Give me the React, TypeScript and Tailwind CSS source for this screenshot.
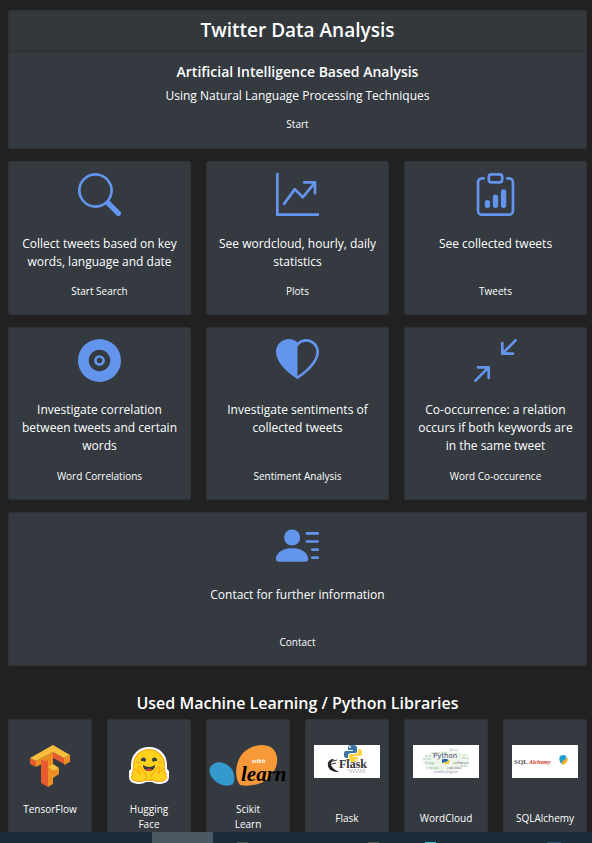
import type { ReactNode } from "react";
import {
  BsSearch,
  BsGraphUpArrow,
  BsClipboardData,
  BsVinylFill,
  BsHeartHalf,
  BsArrowsAngleContract,
  BsPersonLinesFill,
} from "react-icons/bs";

type Feature = { icon: ReactNode; text: string; action: string };

const searchFeatures: Feature[] = [
  { icon: <BsSearch size={43} />, text: "Collect tweets based on key words, language and date", action: "Start Search" },
  { icon: <BsGraphUpArrow size={43} />, text: "See wordcloud, hourly, daily statistics", action: "Plots" },
  { icon: <BsClipboardData size={43} />, text: "See collected tweets", action: "Tweets" },
];

const analysisFeatures: Feature[] = [
  { icon: <BsVinylFill size={43} />, text: "Investigate correlation between tweets and certain words", action: "Word Correlations" },
  { icon: <BsHeartHalf size={43} />, text: "Investigate sentiments of collected tweets", action: "Sentiment Analysis" },
  { icon: <BsArrowsAngleContract size={43} />, text: "Co-occurrence: a relation occurs if both keywords are in the same tweet", action: "Word Co-occurence" },
];

function ActionLink({ children }: { children: ReactNode }) {
  return (
    <a href="#" className="text-[10px] leading-4">
      {children}
    </a>
  );
}

function FeatureCard({ feature }: { feature: Feature }) {
  return (
    <article className="flex flex-col items-center rounded-xs border border-[#2e3338] bg-[#343a40] px-2 pt-[11px] pb-[15px]">
      <div className="text-[#6495ed]">{feature.icon}</div>
      <p className="mt-[19px] mb-2 text-[12px] leading-[18px]">{feature.text}</p>
      <div className="mt-auto flex">
        <ActionLink>{feature.action}</ActionLink>
      </div>
    </article>
  );
}

function TensorFlowLogo() {
  return (
    <svg viewBox="0 0 41 42" className="h-[42px] w-[41px]" aria-hidden="true">
      <path d="M0 13l6 3v6l-6-3z" fill="#e55b2d" />
      <path d="M6 16 23 7v6L6 22z" fill="#ed8e24" />
      <path d="M23 7l11 6v6l-11-6z" fill="#e55b2d" />
      <path d="M34 13l6-3v7l-6 3z" fill="#ed8e24" />
      <path d="M11 15l7 1v26l-7-4z" fill="#e55b2d" />
      <path d="M18 11l5-3v31l-5 3z" fill="#ed8e24" />
      <path d="M23 26l6-3v6l-6 4z" fill="#ed8e24" />
      <path d="M18 22l5-3 6 4-5 3z" fill="#f8bf3c" />
      <path d="M0 13 23 0l17 10-6 3-11-6L6 16z" fill="#f8bf3c" />
    </svg>
  );
}

function HuggingFaceLogo() {
  return (
    <svg viewBox="0 0 40 38" className="h-[38px] w-[40px]" aria-hidden="true">
      <path
        d="M20 0C9 0 2 8 2 18v4c-3 2-3 6-2 8 0 5 5 7 10 7 3 0 5-1 7-2h6c2 1 4 2 7 2 5 0 10-2 10-7 1-2 1-6-2-8v-4C38 8 31 0 20 0z"
        fill="#fff"
      />
      <circle cx="20" cy="18" r="16" fill="#ff9d0b" />
      <circle cx="20" cy="18" r="15" fill="#ffd21e" />
      <circle cx="9" cy="15" r="1.5" fill="#ffb02e" />
      <circle cx="31" cy="15" r="1.5" fill="#ffb02e" />
      <path d="M12 14c-1-4 5-5 5-1l-1 2-2-1zM28 14c1-4-5-5-5-1l1 2 2-1z" fill="#3a3b45" />
      <path d="M14 18q6 4 12 0c0 4-3 6-6 6s-6-2-6-6z" fill="#3a3b45" />
      <path d="M17 23q3-3 6 0-3 2-6 0z" fill="#f04040" />
      <g fill="#ffd21e" stroke="#ff9d0b" strokeLinejoin="round">
        <path d="M5 26c-2-2-1-5 1-4l5 5-2-6c0-2 2-2 3 0l3 4c3 3 3 6 1 8-2 2-9 2-12 0-3-2-2-4 0-4-3-2-1-4 1-3z" />
        <path d="M35 26c2-2 1-5-1-4l-5 5 2-6c0-2-2-2-3 0l-3 4c-3 3-3 6-1 8 2 2 9 2 12 0 3-2 2-4 0-4 3-2 1-4-1-3z" />
      </g>
    </svg>
  );
}

function ScikitLogo() {
  return (
    <svg viewBox="0 0 80 42" className="h-[42px] w-[80px] shrink-0" aria-hidden="true">
      <path d="M4 20c5-5 14-3 19 3 4 5 4 12 2 16-5 3-13 2-19-4-5-5-6-11-2-15z" fill="#3499cd" />
      <path d="M35 8C44-1 59-3 66 5c6 8 3 20-5 28-8 7-20 9-29 7-6-8-5-23 3-32z" fill="#f89939" />
      <text x="44" y="18" fontFamily="Open Sans, sans-serif" fontWeight="700" fontSize="5" fill="#fff">
        scikit
      </text>
      <text
        x="33"
        y="36"
        fontFamily="Liberation Serif, serif"
        fontStyle="italic"
        fontWeight="700"
        fontSize="21"
        fill="#000"
      >
        learn
      </text>
    </svg>
  );
}

function PythonMark() {
  return (
    <g>
      <path
        d="M8 0C4 0 4 2 4 3v2h5v1H2C0 6 0 8 0 9s0 4 2 4h2v-2c0-2 1-3 3-3h4c2 0 2-1 2-2V3c0-2-1-3-5-3z"
        fill="#3873a4"
      />
      <path
        d="M10 17c4 0 4-2 4-3v-2H9v-1h7c2 0 2-2 2-3s0-4-2-4h-2v2c0 2-1 3-3 3H7c-2 0-2 1-2 2v3c0 2 1 3 5 3z"
        fill="#ffd43f"
      />
      <circle cx="6" cy="2" r="1" fill="#fff" />
      <circle cx="12" cy="15" r="1" fill="#fff" />
    </g>
  );
}

function FlaskLogo() {
  return (
    <svg viewBox="0 0 66 33" className="h-[33px] w-[66px] bg-white" aria-hidden="true">
      <g transform="translate(30 0)">
        <PythonMark />
      </g>
      <path d="M20 14c-4 0-7 3-6 7 1 4 5 6 11 6-4-2-7-4-8-7-1-2 1-4 3-6z" fill="#222" />
      <path d="M23 15l-8 2M22 18l-8 2" stroke="#333" />
      <text x="25" y="23" fontFamily="Liberation Serif, serif" fontSize="12" fontWeight="700" fill="#333">
        Flask
      </text>
      <path d="M34 25h18M36 27h16" stroke="#aaa" strokeDasharray="2 1" />
    </svg>
  );
}

const cloudWords: [number, number, number, string, string][] = [
  [36, 6, 3, "#8aa", "library"],
  [12, 19, 4, "#4ba6a0", "Copy"],
  [40, 19, 4, "#667", "software"],
  [13, 24, 3, "#8b8", "language"],
  [34, 24, 3, "#669", "code data"],
  [21, 28, 3, "#779", "module program"],
];

function WordCloudLogo() {
  return (
    <svg viewBox="0 0 66 33" className="h-[33px] w-[66px] bg-white" aria-hidden="true">
      <ellipse cx="33" cy="16" rx="23" ry="10" fill="#eef5ea" />
      <g fill="none" strokeDasharray="3 1 5 1 2 1">
        <path d="M18 8h16M50 10h5M49 13h7" stroke="#b7cfae" />
        <path d="M12 11h6M10 14h8M47 21h8" stroke="#a9c9c4" />
      </g>
      {cloudWords.map(([x, y, size, fill, word]) => (
        <text key={word} x={x} y={y} fontSize={size} fill={fill} fontFamily="Open Sans, sans-serif">
          {word}
        </text>
      ))}
      <text x="20" y="13" fontSize="7" fill="#444a78" fontFamily="DejaVu Sans, sans-serif">
        Python
      </text>
      <path d="M29 18v-3c0-1 1-1 3-1s3 0 3 1-1 2-3 2z" fill="#2868a8" />
      <path d="M31 19c0-2 1-2 3-2 1 0 1-1 1-2h1c1 0 1 4-2 4z" fill="#f0c828" />
    </svg>
  );
}

function SqlAlchemyLogo() {
  return (
    <svg viewBox="0 0 66 33" className="h-[33px] w-[66px] bg-white" aria-hidden="true">
      <text x="2" y="19" fontSize="7" fontWeight="700" fontFamily="Liberation Serif, serif" fill="#555">
        SQL
      </text>
      <text x="17" y="19" fontSize="6" fontWeight="700" fontStyle="italic" fontFamily="Liberation Serif, serif" fill="#d03020">
        Alchemy
      </text>
      <path d="M51 10c3 0 4 2 3 4s-3 3-4 5c-3-2-3-6-2-8z" fill="#1c9fc8" />
      <path d="M55 12c2 2 0 6-4 8-2-2-1-4 1-5s3-1 3-3z" fill="#f8ab28" />
    </svg>
  );
}

type Library = { logo: ReactNode; name: string; banner?: boolean };

const libraries: Library[] = [
  { logo: <TensorFlowLogo />, name: "TensorFlow" },
  { logo: <HuggingFaceLogo />, name: "Hugging Face" },
  { logo: <ScikitLogo />, name: "Scikit Learn" },
  { logo: <FlaskLogo />, name: "Flask", banner: true },
  { logo: <WordCloudLogo />, name: "WordCloud", banner: true },
  { logo: <SqlAlchemyLogo />, name: "SQLAlchemy", banner: true },
];

function LibraryCard({ library }: { library: Library }) {
  return (
    <article className="flex h-40 flex-col items-center rounded-xs border border-[#2e3338] bg-[#343a40] px-4 pt-[25px]">
      <div className={library.banner ? "flex h-[66px] items-start" : "flex h-[42px] items-center"}>{library.logo}</div>
      <p className={library.banner ? "text-[10px] leading-[15px]" : "mt-[15px] text-[10px] leading-[15px]"}>{library.name}</p>
    </article>
  );
}

export default function App() {
  return (
    <div className="flex h-screen flex-col overflow-hidden bg-[#212121] text-center font-['Open_Sans','Noto_Sans',sans-serif] text-white">
      <main className="min-h-0 flex-1 overflow-hidden pt-[10px] pr-[5px] pl-2">
        <header className="rounded-xs border border-[#2e3338] bg-[#343a40]">
          <h1 className="border-b border-[#2b3035] bg-[#33383d] pt-[5px] pb-[7px] text-[19px] leading-7 font-semibold">
            Twitter Data Analysis
          </h1>
          <div className="flex flex-col items-center pt-[11px] pb-4">
            <h2 className="text-[14px] leading-[18px] font-semibold">Artificial Intelligence Based Analysis</h2>
            <p className="mt-[6px] mb-[11px] text-[12px] leading-[18px]">Using Natural Language Processing Techniques</p>
            <ActionLink>Start</ActionLink>
          </div>
        </header>

        <section className="mt-3 grid min-h-[154px] grid-cols-3 gap-[15px]">
          {searchFeatures.map((feature) => (
            <FeatureCard key={feature.action} feature={feature} />
          ))}
        </section>

        <section className="mt-3 grid min-h-[173px] grid-cols-3 gap-[15px]">
          {analysisFeatures.map((feature) => (
            <FeatureCard key={feature.action} feature={feature} />
          ))}
        </section>

        <section className="mt-3 grid min-h-[154px]">
          <FeatureCard
            feature={{ icon: <BsPersonLinesFill size={43} />, text: "Contact for further information", action: "Contact" }}
          />
        </section>

        <h2 className="mt-[25px] text-[16px] leading-6 font-semibold">Used Machine Learning / Python Libraries</h2>
        <section className="mt-1 grid grid-cols-6 gap-[15px]">
          {libraries.map((library) => (
            <LibraryCard key={library.name} library={library} />
          ))}
        </section>
      </main>

      <footer className="flex h-[11px] shrink-0 items-end bg-[#1b2d39]">
        <div className="ml-[152px] h-full w-[61px] bg-[#4a5963]" />
        <div className="ml-6 h-px w-[11px] bg-[#46545e]" />
        <div className="ml-[120px] h-px w-[11px] bg-[#5a5552]" />
        <div className="ml-[46px] h-px w-[11px] bg-[#30c0d8]" />
        <div className="ml-[111px] h-px w-[14px] bg-[#28507c]" />
      </footer>
    </div>
  );
}
